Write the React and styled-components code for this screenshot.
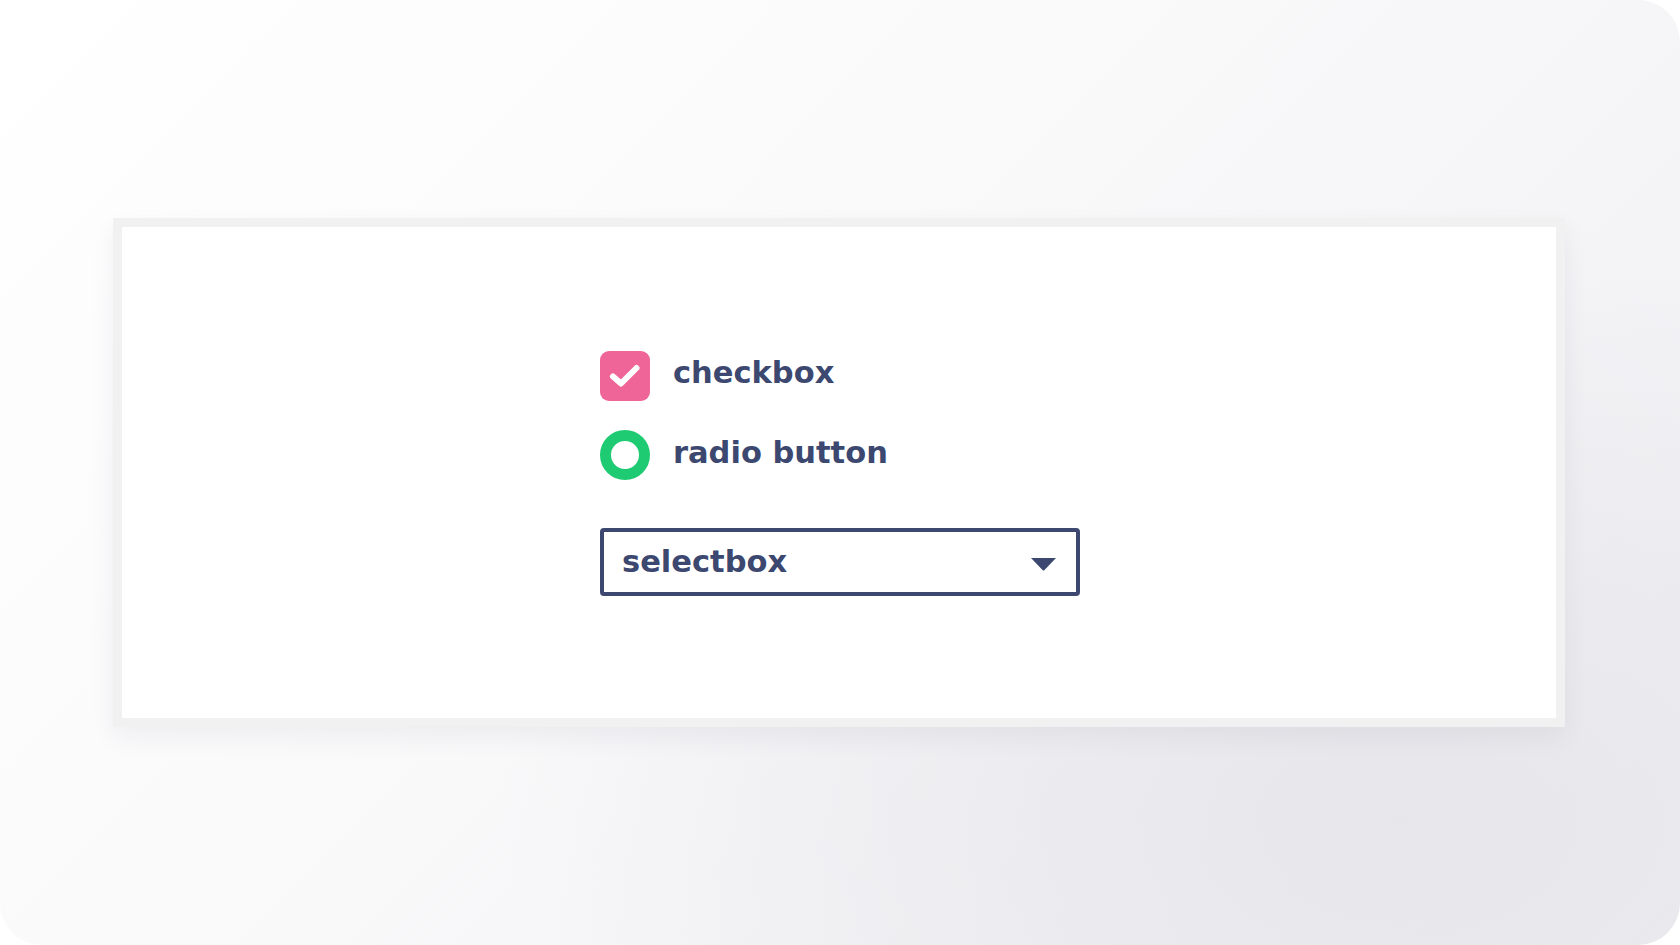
import styled, { createGlobalStyle } from "styled-components";

const GlobalStyle = createGlobalStyle`
  html, body {
    margin: 0;
    padding: 0;
    background: #ffffff;
  }
  body {
    font-family: "DejaVu Sans", "Liberation Sans", sans-serif;
  }
`;

const Frame = styled.div`
  width: 1680px;
  height: 945px;
  box-sizing: border-box;
  border-radius: 42px;
  overflow: hidden;
  padding: 218px 0 0 113px;
  background:
    radial-gradient(ellipse 900px 600px at 1400px 820px, #e6e6eb 0%, rgba(232, 232, 237, 0) 100%),
    linear-gradient(135deg, #ffffff 0%, #fafafb 40%, #efeff2 100%);
`;

const Panel = styled.div`
  width: 1452px;
  height: 509px;
  box-sizing: border-box;
  background: #ffffff;
  border: 9px solid #f1f1f2;
  box-shadow: 0 10px 24px rgba(30, 30, 60, 0.06);
  padding: 124px 0 0 478px;
  display: flex;
  flex-direction: column;
`;

const Option = styled.div`
  display: flex;
  align-items: center;
  gap: 23px;
  height: 50px;
  margin-bottom: ${(p) => p.$spacing}px;
`;

const Label = styled.span`
  font-size: 30.5px;
  font-weight: 700;
  color: #3c4870;
  line-height: 1;
  margin-top: ${(p) => p.$nudge}px;
`;

const CheckBox = styled.div`
  width: 50px;
  height: 50px;
  border-radius: 9px;
  background: #ef6598;
  display: flex;
  align-items: center;
  justify-content: center;
`;

const Radio = styled.div`
  width: 50px;
  height: 50px;
  box-sizing: border-box;
  border-radius: 50%;
  border: 11px solid #1fcb72;
  background: #ffffff;
`;

const Select = styled.div`
  width: 480px;
  height: 68px;
  box-sizing: border-box;
  border: 4px solid #3c4870;
  border-radius: 4px;
  display: flex;
  align-items: center;
  justify-content: space-between;
  padding: 0 19px 0 18px;
`;

const SelectText = styled.span`
  font-size: 30.5px;
  font-weight: 700;
  color: #3c4870;
  line-height: 1;
`;

const Caret = styled.svg`
  width: 27px;
  height: 14px;
  margin-top: 4px;
`;

export default function App() {
  return (
    <>
      <GlobalStyle />
      <Frame>
        <Panel>
          <Option $spacing={29}>
            <CheckBox>
              <svg width="34" height="30" viewBox="0 0 34 30">
                <path
                  d="M5 15.5 L13 22.5 L28.5 7"
                  fill="none"
                  stroke="#ffffff"
                  strokeWidth="6"
                  strokeLinecap="round"
                  strokeLinejoin="round"
                />
              </svg>
            </CheckBox>
            <Label $nudge={-6}>checkbox</Label>
          </Option>
          <Option $spacing={48}>
            <Radio />
            <Label $nudge={-4}>radio button</Label>
          </Option>
          <Select>
            <SelectText>selectbox</SelectText>
            <Caret viewBox="0 0 27 14">
              <path d="M1 1 L26 1 L14.5 13 Q13.5 14 12.5 13 Z" fill="#3c4870" />
            </Caret>
          </Select>
        </Panel>
      </Frame>
    </>
  );
}
